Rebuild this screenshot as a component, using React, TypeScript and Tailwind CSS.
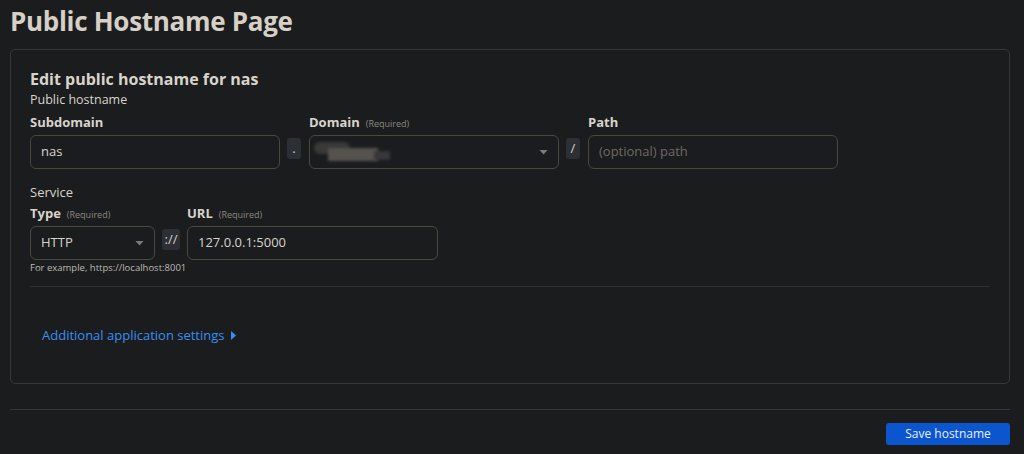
import React from 'react';

const Caret = () => (
  <svg width="9" height="5" viewBox="0 0 9 5" className="shrink-0">
    <path d="M0.5 0 L8.5 0 L4.5 4.5 Z" fill="#7d7b77" />
  </svg>
);

const Sep = ({ children, wide }: { children: React.ReactNode; wide?: boolean }) => (
  <div
    className={
      'mt-[3px] flex h-[21px] shrink-0 items-center justify-center rounded-[3px] bg-[#2c2f33] text-[13px] text-[#d4d2ce] ' +
      (wide ? 'w-[18px]' : 'w-[14px]')
    }
  >
    {children}
  </div>
);

const Label = ({ text, required }: { text: string; required?: boolean }) => (
  <div className="mb-[6px] flex h-[16px] items-baseline gap-[6px]">
    <span className="text-[13px] font-bold text-[#d8d4cc]">{text}</span>
    {required && <span className="text-[9px] text-[#8d8881]">(Required)</span>}
  </div>
);

const boxCls =
  'flex h-[34px] items-center rounded-[6px] border border-[#4a483f] bg-[#1b1c1e] px-[10px] text-[13px]';

export default function App() {
  return (
    <div
      className="min-h-[454px] bg-[#1b1c1e] pl-[10px] pr-[14px] text-[#d8d4cc]"
      style={{ fontFamily: '"Open Sans", "Noto Sans", sans-serif' }}
    >
      <h1 className="pt-[1px] text-[26px] font-bold leading-[40px] tracking-[-0.3px] text-[#d6d0c6]">
        Public Hostname Page
      </h1>

      <div className="mt-[8px] rounded-[5px] border border-[#36373a] px-[19px] pt-[18px] pb-[37px]">
        <h2 className="text-[16px] font-bold leading-[22px] text-[#d8d4cc]">Edit public hostname for nas</h2>
        <div className="mt-[1px] text-[12.5px] leading-[18px]">Public hostname</div>

        <div className="mt-[4px] flex items-end">
          <div className="w-[250px]">
            <Label text="Subdomain" />
            <div className={boxCls + ' text-[#d8d4cc]'}>nas</div>
          </div>
          <div className="ml-[7px] mr-[8px] flex h-[34px] items-start">
            <Sep>.</Sep>
          </div>
          <div className="w-[250px]">
            <Label text="Domain" required />
            <div className={boxCls + ' justify-between pl-[4px]'}>
              <div className="relative h-[22px] w-[80px]">
                <div className="absolute left-0 top-[1px] h-[12px] w-[36px] rounded-full bg-[#3a3937] blur-[1.5px]" />
                <div className="absolute left-[14px] top-[7px] h-[13px] w-[50px] bg-[#56534e] blur-[1.5px]" />
                <div className="absolute left-[60px] top-[10px] h-[9px] w-[16px] bg-[#37363a] blur-[1.5px]" />
              </div>
              <Caret />
            </div>
          </div>
          <div className="ml-[7px] mr-[8px] flex h-[34px] items-start">
            <Sep>/</Sep>
          </div>
          <div className="w-[250px]">
            <Label text="Path" />
            <div className={boxCls + ' text-[#6d6a64]'}>(optional) path</div>
          </div>
        </div>

        <div className="mt-[14px] text-[13px] leading-[18px]">Service</div>
        <div className="mt-[3px] flex items-start">
          <div className="w-[125px]">
            <Label text="Type" required />
            <div className={boxCls + ' justify-between text-[#d8d4cc]'}>
              <span>HTTP</span>
              <Caret />
            </div>
            <div className="mt-[2px] whitespace-nowrap text-[9.5px] leading-[12px] text-[#bdb9b2]">
              For example, https://localhost:8001
            </div>
          </div>
          <div className="ml-[7px] mr-[7px] pt-[22px]">
            <Sep wide>://</Sep>
          </div>
          <div className="w-[251px]">
            <Label text="URL" required />
            <div className={boxCls + ' text-[#d8d4cc]'}>127.0.0.1:5000</div>
          </div>
        </div>

        <div className="mt-[12px] h-px bg-[#2f3033]" />

        <div className="mt-[39px] flex items-center gap-[6px] pl-[12px] text-[13px] text-[#3a8ef0]">
          <span>Additional application settings</span>
          <svg width="5" height="9" viewBox="0 0 5 9">
            <path d="M0 0 L5 4.5 L0 9 Z" fill="#3a8ef0" />
          </svg>
        </div>
      </div>

      <div className="mt-[25px] h-px bg-[#333437]" />

      <div className="flex justify-end pt-[13px]">
        <button className="h-[22px] w-[124px] rounded-[3px] bg-[#0b56cf] text-[12px] text-[#e8eefa]">
          Save hostname
        </button>
      </div>
    </div>
  );
}
